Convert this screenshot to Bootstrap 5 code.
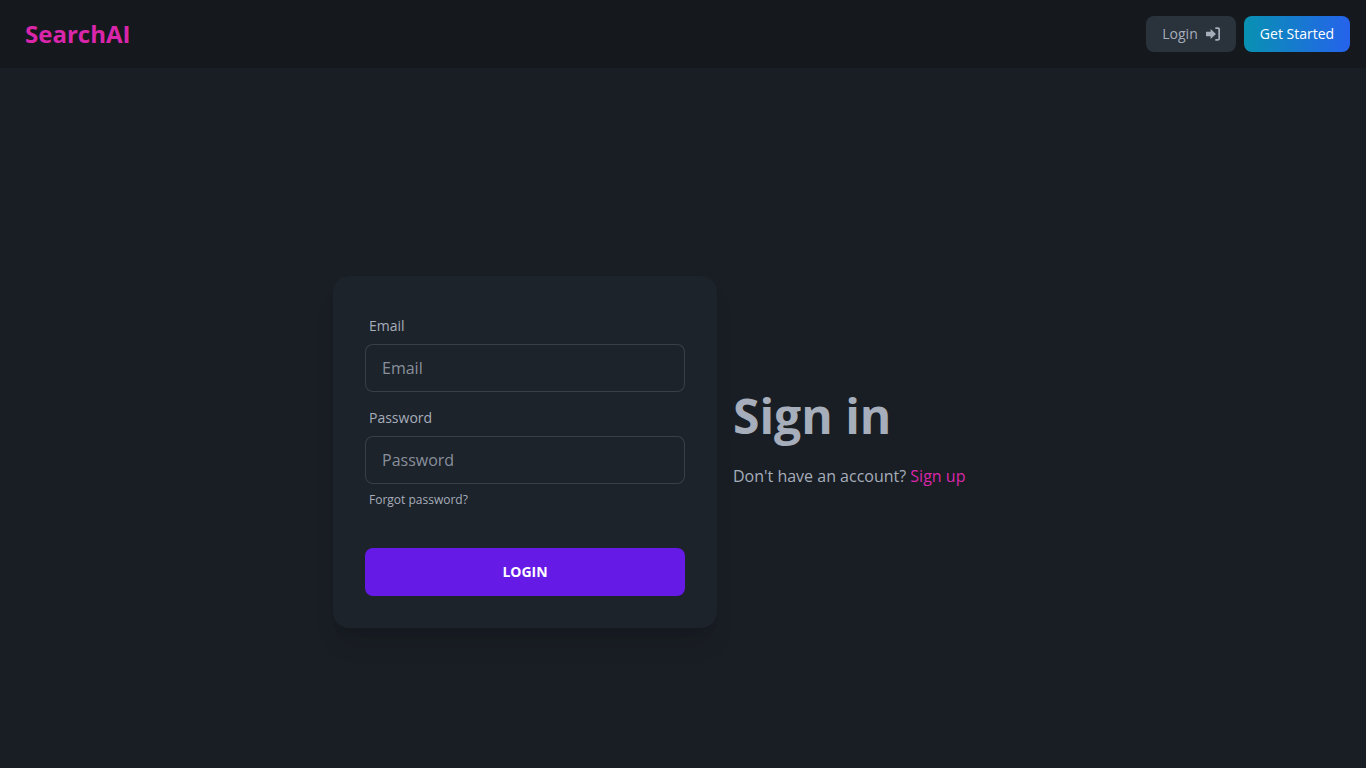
<!DOCTYPE html>
<html lang="en">
<head>
<meta charset="utf-8">
<title>SearchAI</title>
<link href="https://cdn.jsdelivr.net/npm/bootstrap@5.3.0/dist/css/bootstrap.min.css" rel="stylesheet">
<style>
html,body{height:100%}
body{background:#191e24;font-family:"Open Sans",sans-serif;color:#a6adbb;overflow:hidden}
.top-bar{height:68px;background:#15191e;padding:0 16px 0 25px}
.brand-name{font-size:24px;font-weight:700;color:#d926aa;text-decoration:none;line-height:1}
.btn-login{height:36px;width:90px;background:#2a323c;color:#a6adbb;font-size:14px;line-height:1em;border:0;border-radius:8px;padding:0;display:flex;align-items:center;justify-content:center;gap:8px}
.btn-start{height:36px;width:106px;background:linear-gradient(90deg,#0891b2,#2563eb);color:#fff;font-size:14px;line-height:1em;border:0;border-radius:8px;padding:0}
.page-wrap{padding-top:208px;width:700px;margin:0 auto}
.login-panel{width:384px;background:#1d232a;border:0;border-radius:16px;padding:32px;box-shadow:0 20px 25px -5px rgba(0,0,0,.1),0 8px 10px -6px rgba(0,0,0,.1);color:#a6adbb}
.field-label{display:block;font-size:14px;line-height:20px;margin:0;padding:8px 4px;color:#a6adbb}
.field-input{height:48px;background:#1d232a;border:1px solid rgba(166,173,187,.2);border-radius:8px;padding:0 16px;font-size:16px;color:#a6adbb}
.field-input::placeholder{color:rgba(166,173,187,.8);opacity:1}
.field-input:focus{background:#1d232a;color:#a6adbb;border-color:rgba(166,173,187,.2);box-shadow:none}
.forgot-link{display:block;font-size:12px;line-height:16px;padding:8px 4px;color:#a6adbb;text-decoration:none}
.btn-submit{height:48px;flex-shrink:0;width:100%;margin-top:24px;background:#661ae6;color:#fff;font-size:14px;line-height:1em;font-weight:700;border:0;border-radius:8px}
.btn-submit:hover{background:#661ae6;color:#fff}
.intro-title{font-size:48px;font-weight:700;line-height:48px;color:#a6adbb;margin:0}
.intro-text{font-size:16px;line-height:24px;color:#a6adbb;margin:0;padding:24px 0}
.intro-text a{color:#d926aa;text-decoration:none}
</style>
</head>
<body>
<nav class="top-bar d-flex align-items-center justify-content-between">
  <a class="brand-name" href="#">SearchAI</a>
  <div class="d-flex gap-2">
    <button class="btn btn-login" type="button">Login
      <svg width="14" height="14" viewBox="0 0 14 14" aria-hidden="true"><path fill="currentColor" d="M0 4.800h4.600V2L10 7l-5.400 5V9.200H0z"/><path fill="none" stroke="currentColor" stroke-width="1.800" d="M9.300 1.200h2.500a1.400 1.400 0 0 1 1.400 1.400v8.800a1.400 1.400 0 0 1-1.400 1.400H9.300"/></svg>
    </button>
    <button class="btn btn-start" type="button">Get Started</button>
  </div>
</nav>
<main class="page-wrap d-flex align-items-center gap-3">
  <form class="card login-panel flex-shrink-0 d-flex flex-column gap-2">
    <div>
      <label class="field-label" for="em">Email</label>
      <input id="em" class="form-control field-input" type="email" placeholder="Email">
    </div>
    <div>
      <label class="field-label" for="pw">Password</label>
      <input id="pw" class="form-control field-input" type="password" placeholder="Password">
      <a class="forgot-link" href="#">Forgot password?</a>
    </div>
    <button class="btn btn-submit" type="button">LOGIN</button>
  </form>
  <div>
    <h1 class="intro-title">Sign in</h1>
    <p class="intro-text">Don't have an account? <a href="#">Sign up</a></p>
  </div>
</main>
</body>
</html>
